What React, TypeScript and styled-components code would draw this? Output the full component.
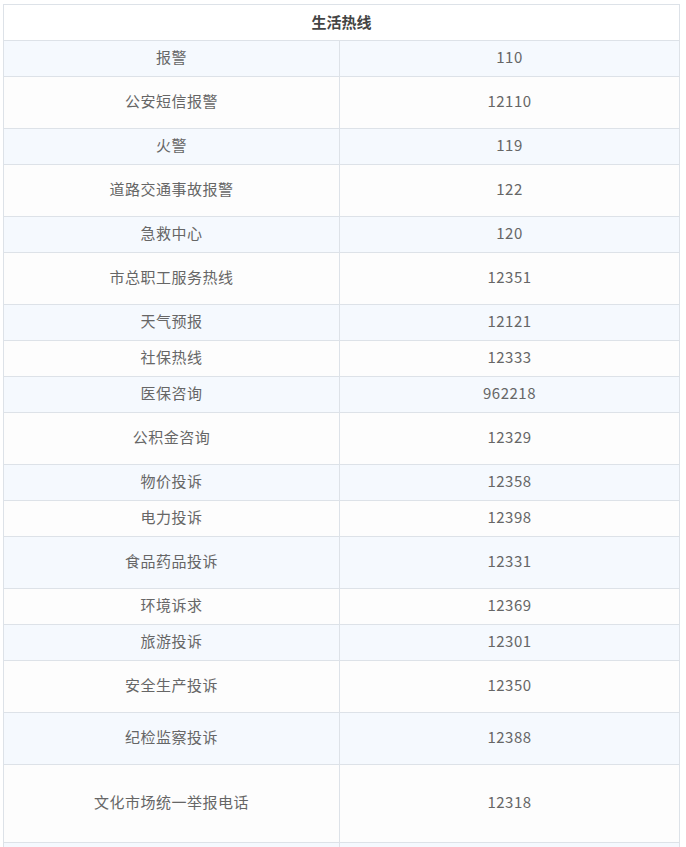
import React from "react";
import styled, { createGlobalStyle } from "styled-components";

const GlobalStyle = createGlobalStyle`
  html, body {
    margin: 0;
    padding: 0;
    background: #ffffff;
  }
  body {
    font-family: "Noto Sans CJK SC", "Noto Sans", sans-serif;
  }
`;

interface HotlineRow {
  name: string;
  phone: string;
  height: number;
}

const rows: HotlineRow[] = [
  { name: "报警", phone: "110", height: 36 },
  { name: "公安短信报警", phone: "12110", height: 52 },
  { name: "火警", phone: "119", height: 36 },
  { name: "道路交通事故报警", phone: "122", height: 52 },
  { name: "急救中心", phone: "120", height: 36 },
  { name: "市总职工服务热线", phone: "12351", height: 52 },
  { name: "天气预报", phone: "12121", height: 36 },
  { name: "社保热线", phone: "12333", height: 36 },
  { name: "医保咨询", phone: "962218", height: 36 },
  { name: "公积金咨询", phone: "12329", height: 52 },
  { name: "物价投诉", phone: "12358", height: 36 },
  { name: "电力投诉", phone: "12398", height: 36 },
  { name: "食品药品投诉", phone: "12331", height: 52 },
  { name: "环境诉求", phone: "12369", height: 36 },
  { name: "旅游投诉", phone: "12301", height: 36 },
  { name: "安全生产投诉", phone: "12350", height: 52 },
  { name: "纪检监察投诉", phone: "12388", height: 52 },
  { name: "文化市场统一举报电话", phone: "12318", height: 78 },
  { name: "", phone: "", height: 36 },
];

export default function App(): React.ReactElement {
  return (
    <Page>
      <GlobalStyle />
      <Table>
        <colgroup>
          <Col $width={336} />
          <Col $width={340} />
        </colgroup>
        <tbody>
          <HeadRow>
            <HeadCell colSpan={2}>生活热线</HeadCell>
          </HeadRow>
          {rows.map((row, i) => (
            <BodyRow key={i} $striped={i % 2 === 0} $height={row.height}>
              <Cell>{row.name}</Cell>
              <Cell>{row.phone}</Cell>
            </BodyRow>
          ))}
        </tbody>
      </Table>
    </Page>
  );
}

const Page = styled.div`
  padding: 4px 7px 0 3px;
  height: 847px;
  overflow: hidden;
  box-sizing: border-box;
`;

const Table = styled.table`
  width: 676px;
  border-collapse: collapse;
  table-layout: fixed;
  color: #666666;
  font-size: 15px;
  letter-spacing: 0.5px;
`;

const Col = styled.col<{ $width: number }>`
  width: ${(p) => p.$width}px;
`;

const HeadRow = styled.tr`
  height: 36px;
  background: #ffffff;
`;

const HeadCell = styled.td`
  border: 1px solid #dde2e8;
  text-align: center;
  vertical-align: middle;
  font-weight: 700;
  color: #444444;
  padding: 0 0 2px;
  line-height: 20px;
  letter-spacing: 0;
`;

const BodyRow = styled.tr<{ $striped: boolean; $height: number }>`
  height: ${(p) => p.$height}px;
  background: ${(p) => (p.$striped ? "#f5f9fe" : "#fdfdfd")};
`;

const Cell = styled.td`
  border: 1px solid #dde2e8;
  text-align: center;
  vertical-align: middle;
  padding: 0 0 3px;
  line-height: 20px;
`;
